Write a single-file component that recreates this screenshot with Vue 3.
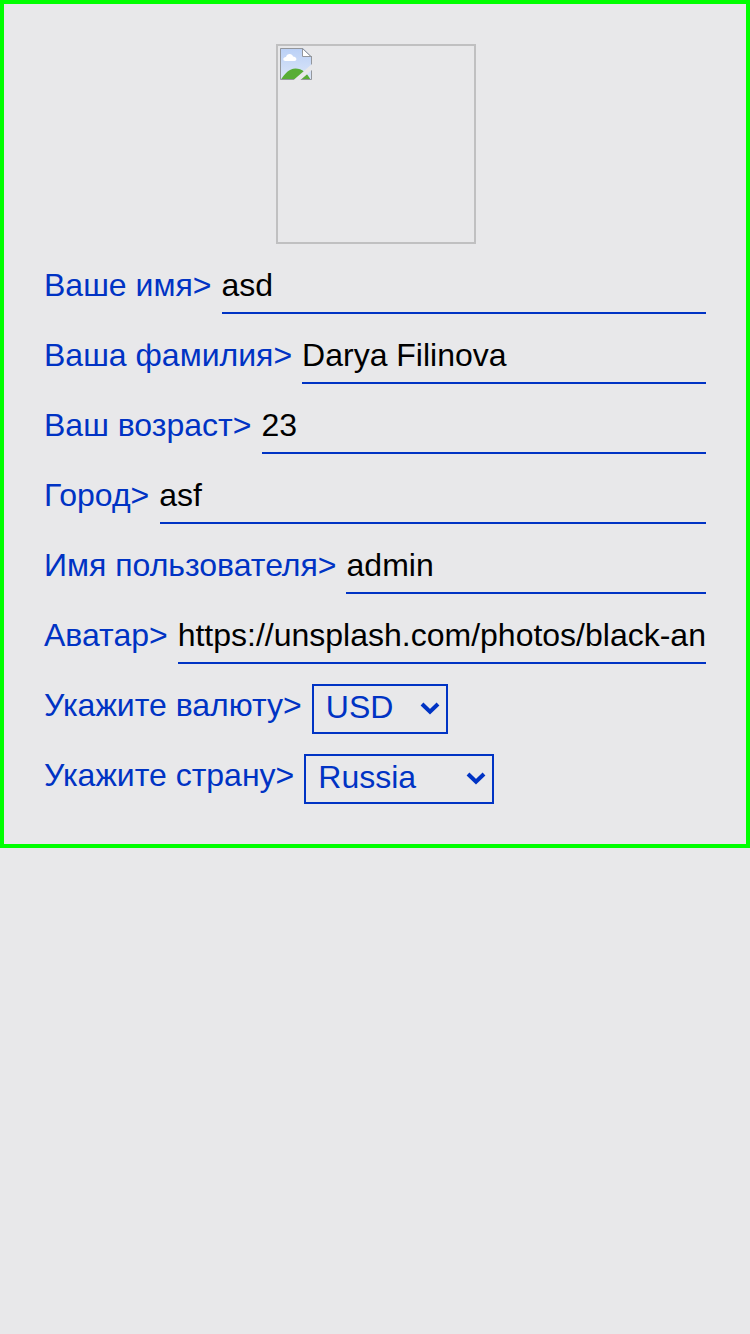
<script setup>
const fields = [
  { label: 'Ваше имя', value: 'asd', start: 178 },
  { label: 'Ваша фамилия', value: 'Darya Filinova', start: 258 },
  { label: 'Ваш возраст', value: '23', start: 218 },
  { label: 'Город', value: 'asf', start: 116 },
  { label: 'Имя пользователя', value: 'admin', start: 302 },
  { label: 'Аватар', value: 'https://unsplash.com/photos/black-and-white', start: 134 },
]
const selects = [
  { label: 'Укажите валюту', value: 'USD', kind: 'currency' },
  { label: 'Укажите страну', value: 'Russia', kind: 'country' },
]
</script>

<template>
  <main class="card">
    <div class="avatar">
      <svg width="32" height="32" viewBox="0 0 32 32">
        <defs>
          <linearGradient id="sky" x1="0" y1="0" x2="0" y2="32" gradientUnits="userSpaceOnUse">
            <stop offset="0" stop-color="#bad0f6" />
            <stop offset="1" stop-color="#dce6f8" />
          </linearGradient>
          <clipPath id="sheet"><path d="M0 0H23L32 9V16L13.5 32H0Z M32 22V32H20.5Z" /></clipPath>
        </defs>
        <g clip-path="url(#sheet)">
          <path d="M0 0H32V32H0Z" fill="url(#sky)" />
          <path d="M1 31.5C5 25.5 9 20.5 15.5 20.5C22 20.5 27 25 30.5 31.5Z" fill="#58ad36" />
          <path d="M0.5 0.5H22.5L31.5 9V31.5H0.5Z" fill="none" stroke="#94979c" />
        </g>
        <path d="M5.5 13C2.5 13 2.5 9 6 9C6.5 5 12.5 5 13 8.5C17 8.5 17.5 13 14.5 13Z" fill="#fff" />
        <path d="M22.5 1V8.5H30.5Z" fill="#fff" />
        <path d="M22.5 0V8.5H32M22.5 0.5L31.5 9" fill="none" stroke="#94979c" />
      </svg>
    </div>
    <label
      v-for="f in fields"
      :key="f.label"
      class="row field"
      :style="{ backgroundSize: `calc(100% - ${f.start}px) 2px` }"
    >
      <span class="label">{{ f.label }}&gt;</span>
      <input class="input" type="text" :value="f.value" />
    </label>
    <div v-for="s in selects" :key="s.label" class="row">
      <span class="label">{{ s.label }}&gt;</span>
      <div class="select" :class="s.kind">
        <span>{{ s.value }}</span>
        <svg width="20" height="14" viewBox="0 0 20 14">
          <path d="M2 3L10 10.8L18 3" fill="none" stroke="#0033c4" stroke-width="4" />
        </svg>
      </div>
    </div>
  </main>
</template>

<style>
body {
  background: #e8e8ea;
}
</style>

<style scoped>
.card {
  box-sizing: border-box;
  display: flex;
  flex-direction: column;
  gap: 20px;
  padding: 40px;
  border: 4px solid #00ff00;
  background: #e8e8ea;
  color: #0033c4;
  font-family: "Liberation Sans", Arial, sans-serif;
  font-size: 32px;
}
.avatar {
  box-sizing: border-box;
  align-self: center;
  width: 200px;
  height: 200px;
  padding: 2px;
  border: 2px solid #c0c0c1;
  margin-left: 2px;
}
.avatar svg {
  display: block;
}
.row {
  display: flex;
  gap: 10px;
  height: 50px;
}
.field {
  background-image: linear-gradient(#0033c4, #0033c4);
  background-repeat: no-repeat;
  background-position: right bottom;
}
.label {
  flex: none;
  line-height: 42px;
}
.input {
  box-sizing: border-box;
  flex: 1;
  min-width: 0;
  height: 48px;
  margin: 0;
  padding: 0 0 6px;
  border: 0;
  border-radius: 0;
  outline: 0;
  background: transparent;
  color: #000;
  font: inherit;
}
.select {
  box-sizing: border-box;
  display: flex;
  justify-content: space-between;
  height: 50px;
  padding: 0 6px 0 12px;
  border: 2px solid #0033c4;
}
.select span {
  line-height: 42px;
}
.select svg {
  margin-top: 15px;
}
.currency {
  width: 136px;
}
.country {
  width: 190px;
}
</style>
